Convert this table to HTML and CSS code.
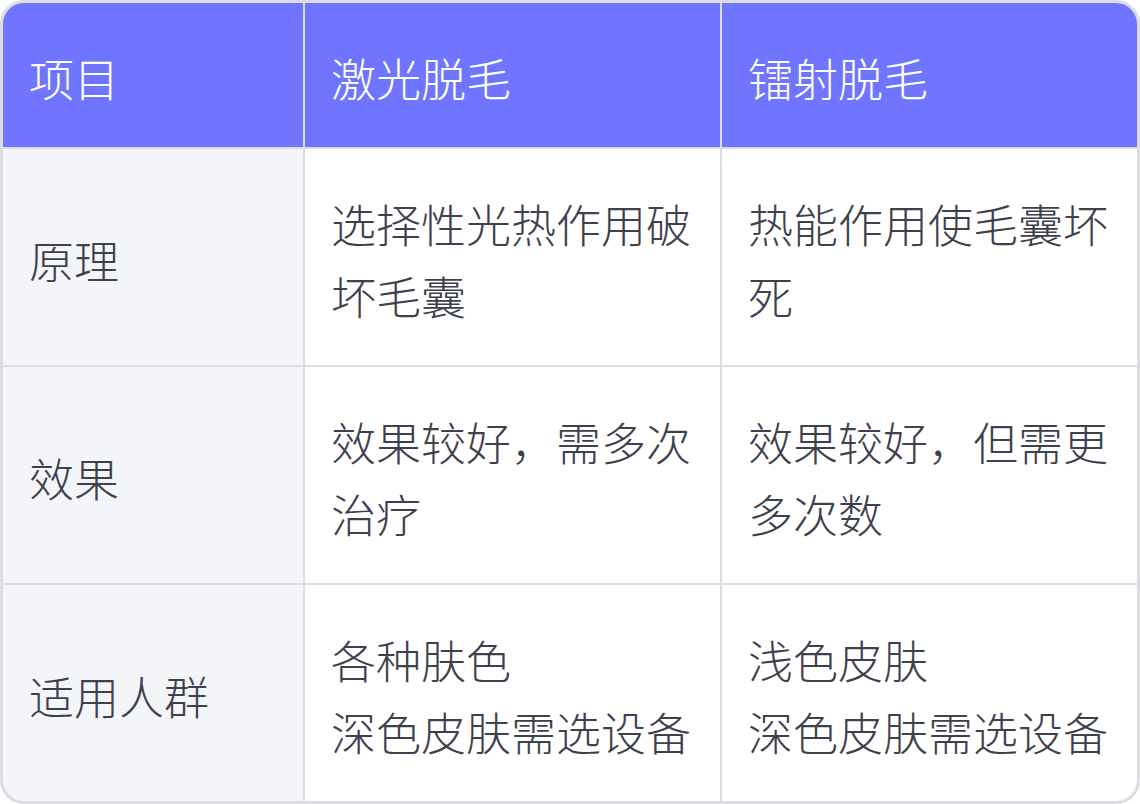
FILE: index.html
```html
<!DOCTYPE html>
<html lang="zh-CN">
<head>
<meta charset="utf-8">
<title>激光脱毛与镭射脱毛对比</title>
<link rel="stylesheet" href="styles.css">
</head>
<body>
<div class="table" role="table">
  <div class="cell head" role="columnheader">项目</div>
  <div class="cell head" role="columnheader">激光脱毛</div>
  <div class="cell head" role="columnheader">镭射脱毛</div>

  <div class="cell label" role="rowheader">原理</div>
  <div class="cell" role="cell">选择性光热作用破坏毛囊</div>
  <div class="cell" role="cell">热能作用使毛囊坏死</div>

  <div class="cell label" role="rowheader">效果</div>
  <div class="cell" role="cell">效果较好，需多次治疗</div>
  <div class="cell" role="cell">效果较好，但需更多次数</div>

  <div class="cell label" role="rowheader">适用人群</div>
  <div class="cell" role="cell">各种肤色<br>深色皮肤需选设备</div>
  <div class="cell" role="cell">浅色皮肤<br>深色皮肤需选设备</div>
</div>
</body>
</html>
```

FILE: styles.css
```css
html, body {
  margin: 0;
  padding: 0;
  background: #ffffff;
}

body {
  font-family: "Noto Sans CJK SC", "Noto Sans", sans-serif;
  color: #3e414d;
}

.table {
  box-sizing: border-box;
  width: 1140px;
  height: 804px;
  display: grid;
  grid-template-columns: 300px 415px 415px;
  grid-template-rows: 144px 216px 216px 216px;
  gap: 2px;
  background: #dcdde3;
  border: 3px solid #dcdde3;
  border-radius: 24px;
  overflow: hidden;
}

.cell {
  box-sizing: border-box;
  display: flex;
  align-items: center;
  padding: 39px 25px 33px 26px;
  font-size: 45px;
  font-weight: 300;
  line-height: 72px;
  background: #ffffff;
  word-break: break-all;
}

.head {
  background: #6f75ff;
  color: #ffffff;
}

.label {
  background: #f4f5f9;
}
```
